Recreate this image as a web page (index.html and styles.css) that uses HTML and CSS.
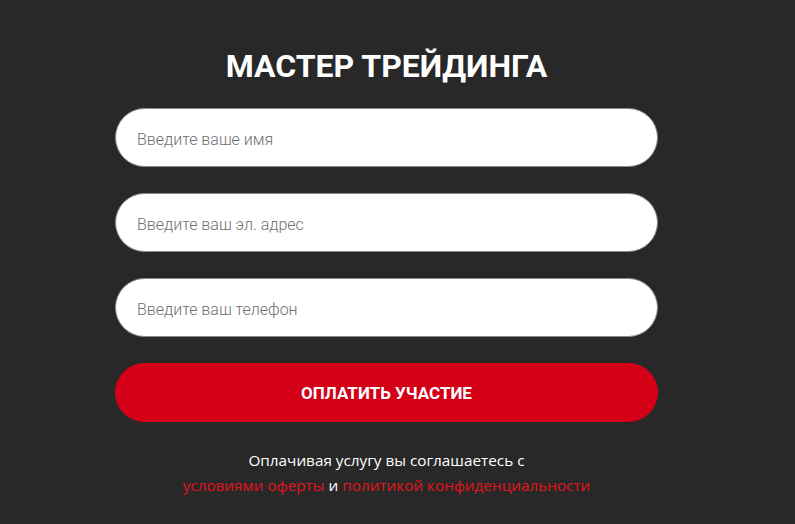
FILE: index.html
```html
<!DOCTYPE html>
<html lang="ru">
<head>
<meta charset="utf-8">
<link rel="stylesheet" href="styles.css">
</head>
<body>
<div class="page">
  <form class="form">
    <h1 class="title">МАСТЕР ТРЕЙДИНГА</h1>
    <input class="field" type="text" placeholder="Введите ваше имя">
    <input class="field" type="text" placeholder="Введите ваш эл. адрес">
    <input class="field" type="text" placeholder="Введите ваш телефон">
    <button class="pay" type="button">ОПЛАТИТЬ УЧАСТИЕ</button>
    <p class="note">Оплачивая услугу вы соглашаетесь с<br><a class="link" href="#">условиями оферты</a> и <a class="link" href="#">политикой конфиденциальности</a></p>
  </form>
</div>
</body>
</html>
```
FILE: styles.css
```css
html, body {
  margin: 0;
  padding: 0;
  background: #282828;
}
.page {
  width: 795px;
  height: 524px;
  background: #282828;
  overflow: hidden;
}
.form {
  width: 543px;
  margin-left: 115px;
  padding-top: 40px;
  display: flex;
  flex-direction: column;
  align-items: stretch;
}
.title {
  margin: 0 0 16px;
  font-family: Roboto, "Liberation Sans", sans-serif;
  font-weight: 700;
  font-size: 32px;
  line-height: 52px;
  color: #ffffff;
  text-align: center;
}
.field {
  box-sizing: border-box;
  height: 59px;
  margin: 0 0 26px;
  padding: 3px 21px 0;
  border: 1px solid #8a8a8a;
  border-radius: 30px;
  background: #ffffff;
  font-family: Roboto, "Liberation Sans", sans-serif;
  font-weight: 300;
  font-size: 16px;
  color: #333;
  outline: none;
}
.field::placeholder {
  color: #6f6f6f;
  opacity: 1;
}
.pay {
  height: 59px;
  margin: 0;
  border: none;
  border-radius: 30px;
  background: #d40018;
  color: #ffffff;
  font-family: Roboto, "Liberation Sans", sans-serif;
  font-weight: 700;
  font-size: 17px;
  cursor: pointer;
}
.note {
  margin: 26px 0 0;
  font-family: "Open Sans", "Liberation Sans", sans-serif;
  font-size: 15.3px;
  line-height: 25px;
  color: #ffffff;
  text-align: center;
}
.link {
  color: #e3141c;
  text-decoration: none;
}
```
